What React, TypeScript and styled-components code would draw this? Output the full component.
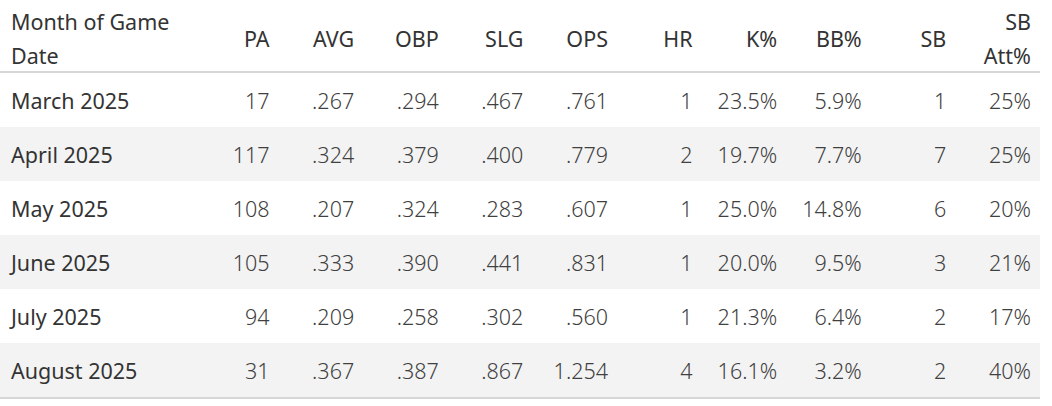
import React from 'react'
import styled, { createGlobalStyle } from 'styled-components'

const GlobalStyle = createGlobalStyle`
    body {
        margin: 0;
        background: #ffffff;
        font-family: 'Noto Sans', 'Open Sans', sans-serif;
    }
`

const COLS = '194px repeat(10, 84.6px)'

const Table = styled.div`
    width: 1040px;
    border-bottom: 2px solid #d6d6d6;
`

const HeaderRow = styled.div`
    display: grid;
    grid-template-columns: ${COLS};
    height: 71px;
    border-bottom: 2px solid #d6d6d6;
`

const HeaderCell = styled.div<{ $left?: boolean }>`
    display: flex;
    align-items: center;
    justify-content: ${(p) => (p.$left ? 'flex-start' : 'flex-end')};
    text-align: ${(p) => (p.$left ? 'left' : 'right')};
    padding: ${(p) => (p.$left ? '5px 0 0 11px' : '5px 9px 0 0')};
    font-size: 21.5px;
    font-weight: 400;
    line-height: 34px;
    color: #333333;
    white-space: nowrap;
`

const Row = styled.div<{ $shaded: boolean }>`
    display: grid;
    grid-template-columns: ${COLS};
    height: 54px;
    align-items: center;
    background: ${(p) => (p.$shaded ? '#f3f3f3' : '#ffffff')};
`

const Label = styled.div`
    padding-left: 11px;
    font-size: 21.5px;
    font-weight: 400;
    color: #333333;
    white-space: nowrap;
`

const Num = styled.div`
    padding-right: 9px;
    text-align: right;
    font-size: 21.5px;
    font-weight: 300;
    color: #404040;
    white-space: nowrap;
`

const headers = ['PA', 'AVG', 'OBP', 'SLG', 'OPS', 'HR', 'K%', 'BB%', 'SB']

const rows: [string, ...string[]][] = [
    ['March 2025', '17', '.267', '.294', '.467', '.761', '1', '23.5%', '5.9%', '1', '25%'],
    ['April 2025', '117', '.324', '.379', '.400', '.779', '2', '19.7%', '7.7%', '7', '25%'],
    ['May 2025', '108', '.207', '.324', '.283', '.607', '1', '25.0%', '14.8%', '6', '20%'],
    ['June 2025', '105', '.333', '.390', '.441', '.831', '1', '20.0%', '9.5%', '3', '21%'],
    ['July 2025', '94', '.209', '.258', '.302', '.560', '1', '21.3%', '6.4%', '2', '17%'],
    ['August 2025', '31', '.367', '.387', '.867', '1.254', '4', '16.1%', '3.2%', '2', '40%'],
]

export default function App() {
    return (
        <>
            <GlobalStyle />
            <Table>
                <HeaderRow>
                    <HeaderCell $left>
                        Month of Game
                        <br />
                        Date
                    </HeaderCell>
                    {headers.map((h) => (
                        <HeaderCell key={h}>{h}</HeaderCell>
                    ))}
                    <HeaderCell>
                        SB
                        <br />
                        Att%
                    </HeaderCell>
                </HeaderRow>
                {rows.map(([month, ...vals], i) => (
                    <Row key={month} $shaded={i % 2 === 1}>
                        <Label>{month}</Label>
                        {vals.map((v, j) => (
                            <Num key={j}>{v}</Num>
                        ))}
                    </Row>
                ))}
            </Table>
        </>
    )
}
